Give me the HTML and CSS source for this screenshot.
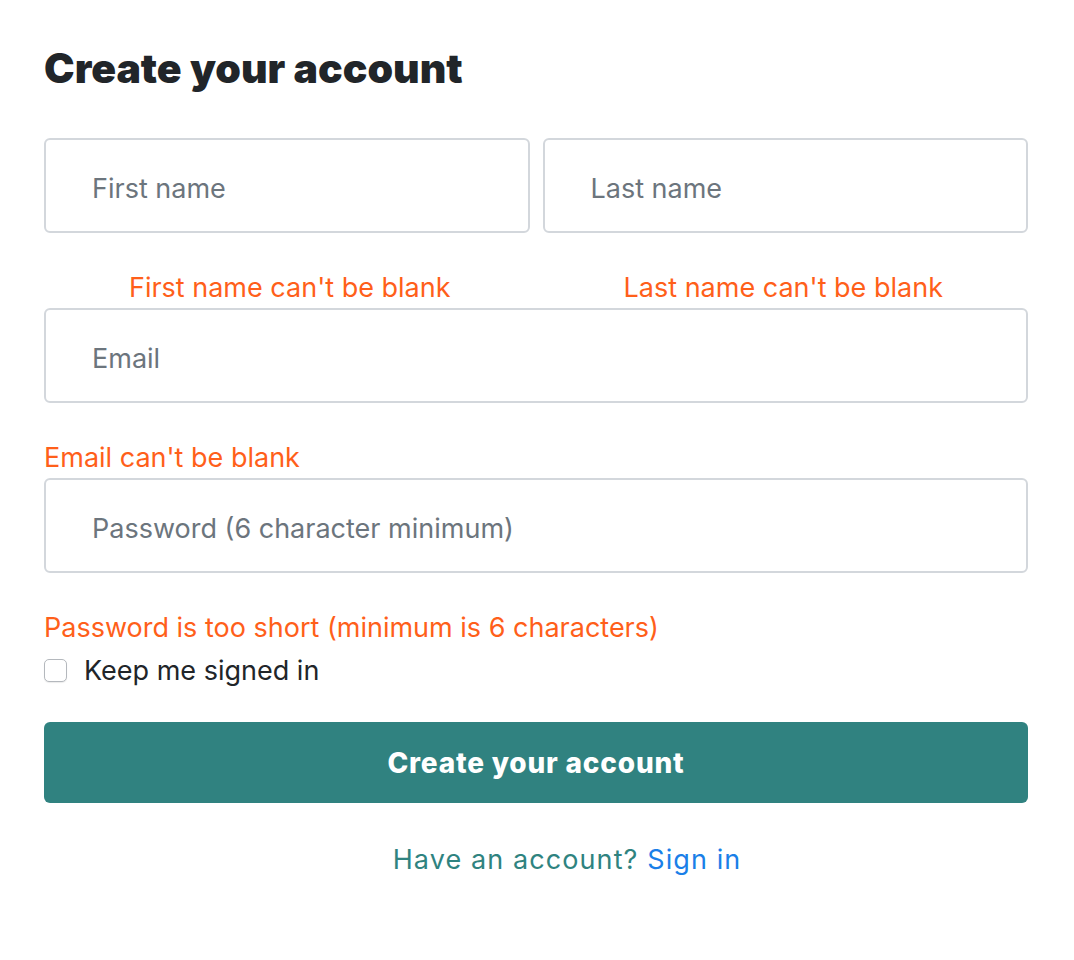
FILE: index.html
```html
<!DOCTYPE html>
<html>
<head>
<meta charset="utf-8">
<link rel="stylesheet" href="styles.css">
</head>
<body>
<main class="page">
  <h1 class="title">Create your account</h1>
  <form class="form">
    <div class="name-row">
      <div class="field">
        <input class="input" type="text" placeholder="First name">
        <div class="error center first">First name can't be blank</div>
      </div>
      <div class="field">
        <input class="input" type="text" placeholder="Last name">
        <div class="error center last">Last name can't be blank</div>
      </div>
    </div>
    <div class="field">
      <input class="input" type="email" placeholder="Email">
      <div class="error">Email can't be blank</div>
    </div>
    <div class="field">
      <input class="input" type="password" placeholder="Password (6 character minimum)">
      <div class="error">Password is too short (minimum is 6 characters)</div>
    </div>
    <label class="check-row">
      <span class="checkbox"></span>
      <span class="check-label">Keep me signed in</span>
    </label>
    <button class="submit" type="button">Create your account</button>
    <p class="footer">Have an account? <a class="link" href="#">Sign in</a></p>
  </form>
</main>
</body>
</html>
```
FILE: styles.css
```css
* { box-sizing: border-box; }
html, body { margin: 0; padding: 0; background: #fff; }
body { font-family: "Inter", "Liberation Sans", sans-serif; color: #212529; }
.page { padding: 40px 46px 0 44px; width: 1074px; }
.title {
  margin: 0 0 42px 0;
  font-size: 41px;
  font-weight: 900;
  line-height: 56px;
  color: #212529;
}
.form { display: flex; flex-direction: column; }
.name-row { display: grid; grid-template-columns: 1fr 1fr; column-gap: 13px; }
.field { display: flex; flex-direction: column; }
.input {
  display: block;
  margin: 0;
  height: 95px;
  width: 100%;
  border: 2px solid #d3d7dc;
  border-radius: 6px;
  padding: 5px 46px 0 46px;
  font-family: "Inter", "Liberation Sans", sans-serif;
  font-size: 27px;
  color: #212529;
  background: #fff;
  outline: none;
}
.input::placeholder { color: #6c757d; }
.error {
  margin-top: 35px;
  height: 40px;
  line-height: 40px;
  font-size: 27px;
  color: #ff5f1a;
}
.error.center { text-align: center; }
.error.first { padding-left: 6px; }
.error.last { padding-right: 4px; }
.check-row { display: flex; align-items: center; height: 44px; gap: 17px; }
.checkbox {
  width: 23px; height: 23px;
  border: 1.5px solid #b4b8bd;
  border-radius: 5px;
  background: #fff;
  box-shadow: 0 1px 1px rgba(0,0,0,0.08);
}
.check-label { font-size: 27px; color: #212529; }
.submit {
  margin-top: 30px;
  height: 81px;
  border: none;
  border-radius: 6px;
  background: #308280;
  color: #fff;
  font-family: "Inter", "Liberation Sans", sans-serif;
  font-size: 28px;
  font-weight: 800;
  letter-spacing: 0.8px;
}
.footer {
  margin: 37px 0 0 0;
  padding-left: 62px;
  line-height: 40px;
  text-align: center;
  font-size: 27px;
  color: #2f8380;
  letter-spacing: 1.1px;
}
.link { color: #1a7fe8; text-decoration: none; }
```
